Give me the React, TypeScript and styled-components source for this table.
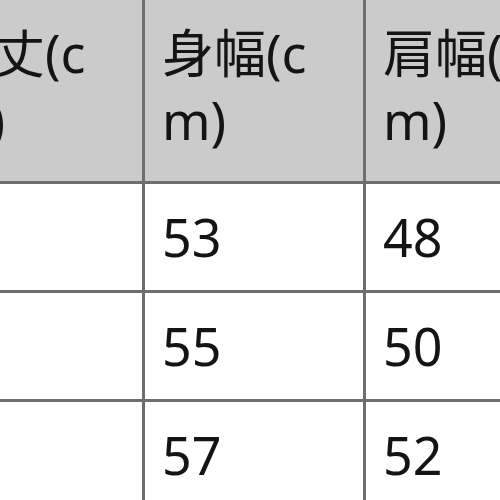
import styled, { createGlobalStyle } from 'styled-components';

const GlobalStyle = createGlobalStyle`
    html, body {
        margin: 0;
        padding: 0;
        background-color: #FFF;
        overflow: hidden;
    }
`;

const Viewport = styled.div`
    width: 500px;
    height: 500px;
    overflow: hidden;
`;

const SizeTableStyled = styled.table`
    border-collapse: collapse;
    table-layout: fixed;
    width: 666px;
    margin: -3px 0 0 -79px;
    font-family: "Noto Sans", "Noto Sans CJK JP", sans-serif;
    font-size: 52px;
    color: #141414;

    col {
        width: 221px;
    }

    th, td {
        border: 3px solid #6e6e6e;
        text-align: left;
        font-weight: 400;
        padding: 0 40px 0 17px;
        word-break: break-all;
        overflow: hidden;
    }
`;

const HeadCell = styled.th`
    background-color: #cbcbcb;
    height: 184px;
    vertical-align: top;
    line-height: 67px;
    box-sizing: border-box;
    padding-top: 19px !important;
`;

const DataCell = styled.td`
    height: 109px;
    vertical-align: middle;
    line-height: 1;
    box-sizing: border-box;
`;

interface SizeRow {
    length: number,
    width: number,
    shoulder: number
}

const rows: SizeRow[] = [
    { length: 70, width: 53, shoulder: 48 },
    { length: 71, width: 55, shoulder: 50 },
    { length: 73, width: 57, shoulder: 52 },
];

const App = () => {
    return (
        <>
            <GlobalStyle />
            <Viewport>
                <SizeTableStyled>
                    <colgroup>
                        <col />
                        <col />
                        <col />
                    </colgroup>
                    <thead>
                        <tr>
                            <HeadCell>着丈(cm)</HeadCell>
                            <HeadCell>身幅(cm)</HeadCell>
                            <HeadCell>肩幅(cm)</HeadCell>
                        </tr>
                    </thead>
                    <tbody>
                        {rows.map((row) => (
                            <tr key={row.width}>
                                <DataCell>{row.length}</DataCell>
                                <DataCell>{row.width}</DataCell>
                                <DataCell>{row.shoulder}</DataCell>
                            </tr>
                        ))}
                    </tbody>
                </SizeTableStyled>
            </Viewport>
        </>
    );
};

export default App;
